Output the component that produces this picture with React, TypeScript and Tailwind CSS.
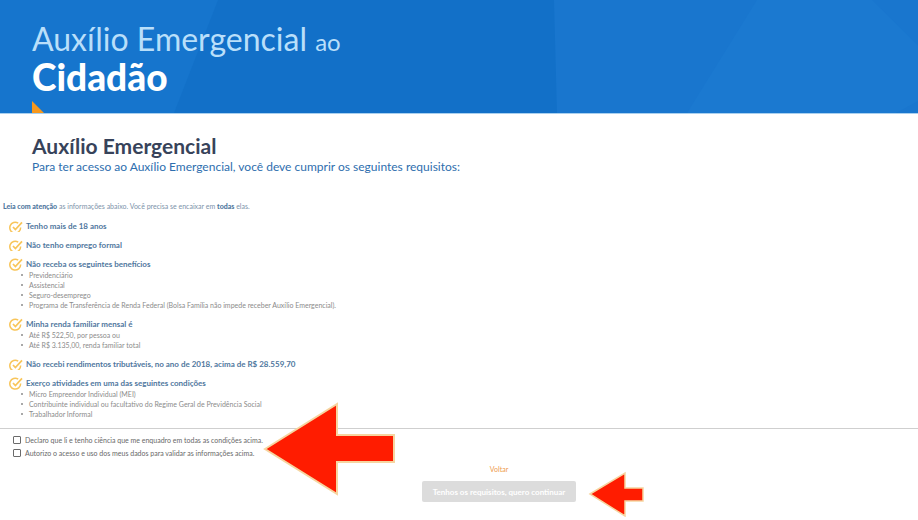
type Requirement = {
  title: string;
  details?: string[];
};

const requirements: Requirement[] = [
  { title: "Tenho mais de 18 anos" },
  { title: "Não tenho emprego formal" },
  {
    title: "Não receba os seguintes benefícios",
    details: [
      "Previdenciário",
      "Assistencial",
      "Seguro-desemprego",
      "Programa de Transferência de Renda Federal (Bolsa Família não impede receber Auxílio Emergencial).",
    ],
  },
  {
    title: "Minha renda familiar mensal é",
    details: ["Até R$ 522,50, por pessoa ou", "Até R$ 3.135,00, renda familiar total"],
  },
  { title: "Não recebi rendimentos tributáveis, no ano de 2018, acima de R$ 28.559,70" },
  {
    title: "Exerço atividades em uma das seguintes condições",
    details: [
      "Micro Empreendor Individual (MEI)",
      "Contribuinte individual ou facultativo do Regime Geral de Previdência Social",
      "Trabalhador Informal",
    ],
  },
];

const declarations = [
  { id: "ciencia", label: "Declaro que li e tenho ciência que me enquadro em todas as condições acima." },
  { id: "autorizo", label: "Autorizo o acesso e uso dos meus dados para validar as informações acima." },
];

// Single-line requirements show the icon with its lower edge cut off
function CheckIcon({ cropped }: { cropped: boolean }) {
  return (
    <svg
      className={cropped ? "h-[11px] w-[14px] shrink-0" : "h-[13px] w-[14px] shrink-0"}
      viewBox={cropped ? "0 0 14 11" : "0 0 14 13"}
      fill="none"
      stroke="#f8c55a"
      aria-hidden="true"
    >
      <path d="M9.2 2.2A5.4 5.4 0 1 0 11.6 6.6" strokeWidth="1.5" />
      <path d="M4 6 6.4 8.6 13 1.4" strokeWidth="1.7" />
    </svg>
  );
}

function Header() {
  return (
    <header className="relative h-[114px] overflow-hidden border-b border-[#a9d0ef] bg-[#1270c8] px-8 pt-5">
      <svg
        className="absolute inset-0 h-full w-full"
        viewBox="0 0 918 114"
        preserveAspectRatio="none"
        aria-hidden="true"
      >
        <path d="M0 0H218L174 114H0Z" fill="#1675cd" />
        <path d="M554 0H918V114H557Z" fill="#1976ce" />
        <path d="M757 0H872L918 46V102L896 114H687Z" fill="#1b79d0" />
      </svg>
      <svg className="absolute bottom-0 left-8 h-3 w-3" viewBox="0 0 12 12" aria-hidden="true">
        <path d="M0 0 12 12H0Z" fill="#f7981d" />
      </svg>
      <h1 className="relative text-[32px] leading-[38px] font-normal text-[#b9dffa]">
        Auxílio Emergencial <span className="text-[24px]">ao</span>
        <strong className="block text-[37px] leading-[32px] font-black text-white">Cidadão</strong>
      </h1>
    </header>
  );
}

export default function App() {
  return (
    <div className="min-h-screen bg-white font-[Lato,sans-serif]">
      <Header />

      <main>
        <div className="px-8 pt-5">
          <h2 className="text-[21px] leading-6 font-bold text-[#37435a]">Auxílio Emergencial</h2>
          <p className="text-[12px] leading-[18px] text-[#2e6eae]">
            Para ter acesso ao Auxílio Emergencial, você deve cumprir os seguintes requisitos:
          </p>
        </div>

        <p className="mt-[25px] px-[3px] text-[7px] leading-[10px] text-[#7d93aa]">
          <strong className="font-black text-[#4f779e]">Leia com atenção</strong> as informações abaixo.
          Você precisa se encaixar em <strong className="font-black text-[#4f779e]">todas</strong> elas.
        </p>

        <ul className="mt-[10px] flex flex-col gap-[9px] pl-[9px] text-[7px] leading-[10px]">
          {requirements.map((item) => (
            <li key={item.title}>
              <div className="flex h-[10px] items-center gap-[3px]">
                <CheckIcon cropped={!item.details} />
                <strong className="text-[8px] font-bold text-[#4f779e]">{item.title}</strong>
              </div>
              {item.details && (
                <ul className="pt-px pl-3 text-[#8b8b8b]">
                  {item.details.map((detail) => (
                    <li key={detail} className="flex items-center gap-[6px]">
                      <span className="size-[2px] rounded-full bg-[#8b8b8b]" />
                      {detail}
                    </li>
                  ))}
                </ul>
              )}
            </li>
          ))}
        </ul>

        <form className="mt-[9px] border-t border-[#cfcfcf] pt-1" onSubmit={(e) => e.preventDefault()}>
          {declarations.map((item) => (
            <div key={item.id} className="flex h-[13px] items-center gap-1 pl-[13px]">
              <input
                id={item.id}
                type="checkbox"
                className="size-2 appearance-none rounded-[1px] border border-[#6b6b6b] bg-white checked:bg-[#6b6b6b]"
              />
              <label htmlFor={item.id} className="text-[7px] leading-[10px] text-[#686868]">
                {item.label}
              </label>
            </div>
          ))}

          <div className="mt-[5px] flex flex-col items-center gap-[7px] pl-20">
            <a href="#voltar" className="text-[7px] leading-[10px] text-[#ee9a4c]">
              Voltar
            </a>
            <button
              type="submit"
              className="h-[21px] w-[154px] rounded-[2px] bg-[#dcdcdc] text-[8px] font-bold whitespace-nowrap text-white"
            >
              Tenhos os requisitos, quero continuar
            </button>
          </div>
        </form>
      </main>

      <svg
        className="absolute top-[402px] left-[263px] h-[94px] w-[134px]"
        viewBox="0 0 134 94"
        fill="#ff1c00"
        stroke="#f6d5a0"
        strokeWidth="2"
        aria-hidden="true"
      >
        <path d="M2 47 74 2V33H131V60H74V92Z" />
      </svg>
      <svg
        className="absolute top-[471px] left-[588px] h-[46px] w-[56px]"
        viewBox="0 0 56 46"
        fill="#ff1c00"
        stroke="#f6d5a0"
        strokeWidth="1.5"
        aria-hidden="true"
      >
        <path d="M2 23 37 2V17H55V30H37V45Z" />
      </svg>
    </div>
  );
}
